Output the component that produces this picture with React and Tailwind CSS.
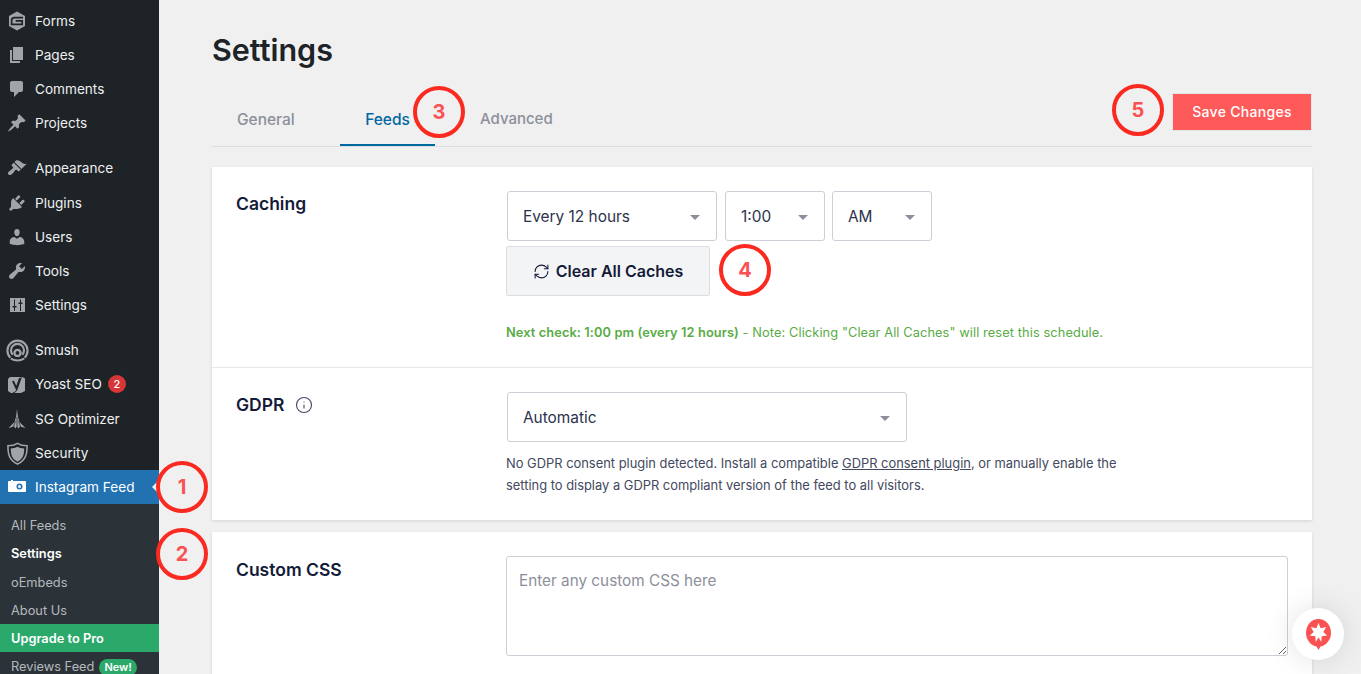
import { Info, RefreshCw } from 'lucide-react';

const Dash = ({ d, className = '' }) => (
  <svg viewBox="0 0 20 20" className={`w-5 h-5 shrink-0 fill-[#a0a5aa] ${className}`}>
    <path fillRule="evenodd" d={d} />
  </svg>
);

const FormsIcon = () => (
  <svg viewBox="0 0 20 20" className="w-[20px] h-[20px] shrink-0">
    <path d="M10 .500l8 4.600v9.800l-8 4.600-8-4.600V5.100z" fill="#a0a5aa" />
    <path d="M16 6.700H7.500Q4.600 6.700 4.600 9.400v3.900h10.600v-3.500H8.700" fill="none" stroke="#1d2327" strokeWidth="1.700" />
  </svg>
);

const SmushIcon = () => (
  <svg viewBox="0 0 24 24" className="w-[23px] h-[23px] shrink-0 fill-none stroke-[#a0a5aa]">
    <path d="M4.500 19.500a10.500 10.500 0 1 1 15 0" strokeWidth="2.200" />
    <path d="M7 16.500a6.800 6.800 0 1 1 10 0" strokeWidth="2.200" />
    <circle cx="12" cy="14.500" r="3.200" strokeWidth="2.400" />
    <path d="M5 20.500q7 4 14 0" strokeWidth="2" />
  </svg>
);

const YoastIcon = () => (
  <svg viewBox="0 0 20 20" className="w-[20px] h-[20px] shrink-0">
    <path d="M3 3h12.500l2.500 1.500V17l-4 2H4l-3-2V5z" fill="#a0a5aa" />
    <path d="M15.500 0L10 15.500q-1 2.800-4 3.500" fill="none" stroke="#1d2327" strokeWidth="1" />
    <path d="M6 7l3.400 7.500L13 4" fill="none" stroke="#1d2327" strokeWidth="1.900" />
  </svg>
);

const SgIcon = () => (
  <svg viewBox="0 0 20 20" className="w-[20px] h-[22px] shrink-0 fill-[#a0a5aa]">
    <path d="M10 0l1 8 1.500 5 6 6-5.500-1.500-1.500 2-1.500-2-1.500 2-1.500-2L1.500 19l6-6L9 8z" />
    <path d="M10 8v11M8.500 12l-2.500 7M11.500 12l2.500 7" stroke="#1d2327" strokeWidth=".7" fill="none" />
  </svg>
);

const ShieldIcon = () => (
  <svg viewBox="0 0 24 24" className="w-[23px] h-[23px] shrink-0">
    <path d="M12 1.500c3 2 6.500 2.500 10 2.500 0 8-1 15-10 19C3 19 2 12 2 4c3.500 0 7-.5 10-2.500z" fill="none" stroke="#a0a5aa" strokeWidth="1.600" />
    <path d="M12 5c2 1.200 4.500 1.600 7 1.700 0 6-1 10.800-7 13.800C6 17.500 5 12.700 5 6.700c2.500-.1 5-.5 7-1.700z" fill="#a0a5aa" />
  </svg>
);

const CameraIcon = () => (
  <svg viewBox="0 0 20 20" className="w-5 h-5 shrink-0 fill-white">
    <path
      fillRule="evenodd"
      d="M2 4h2V3h2v1h9l1.500 0H18q1 0 1 1v9q0 1-1 1H2q-1 0-1-1V5q0-1 1-1zm10.500 2.500a3 3 0 1 0 0 6 3 3 0 0 0 0-6zm0 1.500a1.500 1.500 0 1 1 0 3 1.500 1.500 0 0 1 0-3z"
    />
  </svg>
);

const pages = 'M6 15V2h10v13H6zm-1 1h8v2H3V5h2v11z';
const comments = 'M5 2h9c1.100 0 2 .9 2 2v7c0 1.100-.9 2-2 2h-2l-5 5v-5H5c-1.100 0-2-.9-2-2V4c0-1.100.9-2 2-2z';
const pin = 'M10.440 3.020l1.820-1.820 6.360 6.350-1.830 1.820c-1.050-.68-2.480-.57-3.410.36l-.75.75c-.92.93-1.040 2.350-.35 3.410l-1.830 1.820-2.410-2.410-2.800 2.790c-.42.42-3.380 2.710-3.800 2.290s1.860-3.390 2.280-3.810l2.790-2.790L4.100 9.360l1.830-1.820c1.050.69 2.480.57 3.400-.36l.75-.75c.93-.92 1.050-2.350.36-3.410z';
const brush = 'M14.480 11.060L7.410 3.990l1.500-1.500c.5-.56 2.300-.47 3.510.32 1.210.8 1.430 1.280 2.910 2.100 1.180.64 2.450 1.260 4.450.85zm-.71.71L6.700 4.700 4.930 6.470c-.39.39-.39 1.020 0 1.410l1.060 1.060c.39.39.39 1.030 0 1.420-.6.6-1.430 1.110-2.210 1.690-.35.26-.7.53-1.010.84C1.430 13.230.39 15.460 1.400 16.600c1.060 1.060 3.190-.04 4.520-1.370.31-.31.58-.66.84-1.010.58-.78 1.090-1.610 1.690-2.210.39-.39 1.020-.39 1.410 0l1.060 1.060c.39.39 1.020.39 1.410 0z';
const plug = 'M13.110 4.360L9.870 7.600 8 5.730l3.240-3.240c.35-.34 1.050-.2 1.560.32.52.51.66 1.210.31 1.550zm-8 1.770l.91-1.120 9.010 9.010-1.190.84c-.71.71-2.630 1.160-3.820 1.160H6.140L4.900 17.260c-.59.59-1.540.59-2.120 0-.59-.58-.59-1.530 0-2.120l1.240-1.240v-3.880c0-1.130.4-3.190 1.090-3.890zm7.260 3.970l3.240-3.240c.34-.35 1.040-.21 1.550.31.52.51.66 1.210.31 1.550l-3.240 3.250z';
const users = 'M10 9.250c-2.270 0-2.730-3.440-2.730-3.440C7 4.020 7.820 2 9.970 2c2.160 0 2.980 2.020 2.710 3.810 0 0-.41 3.440-2.680 3.440zm0 2.570L12.720 10c2.390 0 4.520 2.330 4.520 4.530v2.490s-3.650 1.130-7.240 1.130c-3.650 0-7.240-1.130-7.240-1.130v-2.490c0-2.250 1.940-4.480 4.470-4.480z';
const wrench = 'M16.680 9.770c-1.340 1.340-3.300 1.670-4.950.99l-5.410 6.520c-.99.99-2.590.99-3.580 0s-.99-2.590 0-3.570l6.520-5.420c-.68-1.650-.35-3.610.99-4.950 1.280-1.280 3.120-1.620 4.720-1.060l-2.890 2.890 2.820 2.820 2.860-2.870c.53 1.580.18 3.390-1.080 4.650z';
const sliders = 'M18 3v14H3V3h15zM8 11h1.500v1.500H8V16H7v-3.500H5.500V11H7V4.500h1V11zm5-2h-1.500V7.500H13V4.500h1v3h1.500V9H14v7h-1V9z';

const MenuRow = ({ icon, label, children, className = '' }) => (
  <div className={`flex items-center h-[34px] pl-[7px] text-[#f0f0f1] ${className}`}>
    <span className="w-5 h-5 mr-2 flex items-center justify-center">{icon}</span>
    <span className="text-[13.600px] leading-[20px]">{label}</span>
    {children}
  </div>
);

const SubRow = ({ children, className = '' }) => (
  <div className={`flex items-center h-[28px] pl-[11px] text-[12.800px] text-[#b4b9be] ${className}`}>{children}</div>
);

const Sidebar = () => (
  <aside className="w-[159px] h-[674px] shrink-0 overflow-hidden bg-[#1d2327] pt-[4px]">
    <MenuRow icon={<FormsIcon />} label="Forms" />
    <MenuRow icon={<Dash d={pages} />} label="Pages" />
    <MenuRow icon={<Dash d={comments} />} label="Comments" />
    <MenuRow icon={<Dash d={pin} />} label="Projects" />
    <MenuRow icon={<Dash d={brush} />} label="Appearance" className="mt-[11px]" />
    <MenuRow icon={<Dash d={plug} />} label="Plugins" className="mt-px" />
    <MenuRow icon={<Dash d={users} />} label="Users" />
    <MenuRow icon={<Dash d={wrench} />} label="Tools" />
    <MenuRow icon={<Dash d={sliders} />} label="Settings" />
    <MenuRow icon={<SmushIcon />} label="Smush" className="mt-[11px]" />
    <MenuRow icon={<YoastIcon />} label="Yoast SEO">
      <span className="ml-[6px] w-[18px] h-[18px] rounded-full bg-[#d63638] text-white text-[11px] font-medium flex items-center justify-center">2</span>
    </MenuRow>
    <MenuRow icon={<SgIcon />} label="SG Optimizer" className="mt-px" />
    <MenuRow icon={<ShieldIcon />} label="Security" />
    <div className="relative">
      <MenuRow icon={<CameraIcon />} label="Instagram Feed" className="bg-[#2271b1] text-white" />
      <span className="absolute right-0 top-[10px] border-y-[7px] border-r-[7px] border-y-transparent border-r-[#f0f0f1]" />
    </div>
    <div className="bg-[#2c3338] pt-[8px] h-[200px]">
      <SubRow>All Feeds</SubRow>
      <SubRow className="font-semibold text-white">Settings</SubRow>
      <SubRow className="pt-[2px]">oEmbeds</SubRow>
      <SubRow className="pt-[2px]">About Us</SubRow>
      <SubRow className="pt-[2px] bg-[#2ba96b] font-semibold text-white">Upgrade to Pro</SubRow>
      <SubRow className="pt-[2px]">
        Reviews Feed
        <span className="ml-[5px] px-[5px] h-[17px] rounded-full bg-[#2ba96b] text-white text-[11px] font-semibold flex items-center">New!</span>
      </SubRow>
    </div>
  </aside>
);

const Select = ({ value, className = '' }) => (
  <div className={`h-[50px] flex items-center justify-between pl-[15px] pr-[16px] bg-white border border-[#cdcfd6] rounded-[3px] text-[15.400px] text-[#2c324c] ${className}`}>
    <span className="pt-[2px]">{value}</span>
    <span className="border-x-[5px] border-t-[5px] border-x-transparent border-t-[#8c8f9a] mt-[3px]" />
  </div>
);

const SectionTitle = ({ children, className = '' }) => (
  <h2 className={`w-[270px] shrink-0 text-[17.500px] leading-[26px] font-semibold text-[#141b38] ${className}`}>{children}</h2>
);

const Marker = ({ n, className }) => (
  <div className={`absolute w-[52px] h-[52px] rounded-full border-[4px] border-[#fb2a20] flex items-center justify-center text-[20px] font-bold text-[#fa5252] ${className}`}>
    {n}
  </div>
);

export default function App() {
  return (
    <div className="relative flex w-[1361px] h-[674px] overflow-hidden bg-[#f0f0f1] font-['Inter',sans-serif]">
      <Sidebar />

      <main className="flex-1 pl-[53px] pr-[49px] pt-[30px]">
        <h1 className="text-[30.500px] leading-[40px] font-semibold text-[#1d2327]">Settings</h1>

        <div className="flex items-end justify-between h-[77px] border-b border-[#dcdde1]">
          <div className="flex text-[15.500px] font-medium text-[#8c8f9a]">
            <span className="w-[128px] h-[46px] pt-[8px] pl-[25px]">General</span>
            <span className="w-[95px] h-[46px] pt-[8px] text-center text-[#0068a0] border-b-2 border-[#0068a0]">Feeds</span>
            <span className="ml-[45px] h-[46px] pt-[8px] text-[15px]">Advanced</span>
          </div>
          <button className="w-[140px] h-[38px] mb-[15px] pb-[2px] bg-[#ff5a5a] border border-[#e5e5e8] text-white text-[14px] font-medium tracking-[0.3px]">
            Save Changes
          </button>
        </div>

        <div className="mt-5 bg-white shadow-[0_1px_3px_rgba(0,0,0,0.12)]">
          <section className="flex h-[201px] px-6 pt-6 border-b border-[#e8e8eb]">
            <SectionTitle>Caching</SectionTitle>
            <div>
              <div className="flex gap-2 pl-px">
                <Select value="Every 12 hours" className="w-[210px]" />
                <Select value="1:00" className="w-[100px]" />
                <Select value="AM" className="w-[100px] -ml-px" />
              </div>
              <button className="mt-[5px] w-[204px] h-[50px] flex items-center justify-center gap-[6px] bg-[#f3f4f6] border border-[#dcdde1] rounded-[2px] text-[16px] font-semibold text-[#141b38]">
                <RefreshCw className="w-[17px] h-[17px]" strokeWidth={1.500} />
                Clear All Caches
              </button>
              <p className="mt-[29px] text-[12.800px] leading-4 tracking-[0.1px] text-[#59ab46] whitespace-nowrap">
                <b className="font-semibold">Next check: 1:00 pm (every 12 hours)</b> - Note: Clicking "Clear All Caches" will reset this schedule.
              </p>
            </div>
          </section>

          <section className="flex h-[152px] px-6 pt-6">
            <SectionTitle>
              <span className="flex items-center gap-[11px]">
                GDPR <Info className="w-[18px] h-[18px] text-[#434960]" strokeWidth={1.500} />
              </span>
            </SectionTitle>
            <div>
              <Select value="Automatic" className="w-[400px] ml-px" />
              <p className="mt-[11px] text-[12.900px] leading-[22px] text-[#434960] w-[620px]">
                No GDPR consent plugin detected. Install a compatible <u>GDPR consent plugin</u>, or manually enable the setting to display a GDPR compliant version of the feed to all visitors.
              </p>
            </div>
          </section>
        </div>

        <section className="mt-3 flex h-[200px] bg-white px-6 pt-6 shadow-[0_1px_3px_rgba(0,0,0,0.12)]">
          <SectionTitle className="pt-px">Custom CSS</SectionTitle>
          <textarea
            readOnly
            placeholder="Enter any custom CSS here"
            className="w-[782px] h-[100px] px-3 py-[14px] bg-white border border-[#cdcfd6] rounded-[3px] text-[15.300px] leading-[20px] placeholder:text-[#8c8f9a] outline-none"
          />
        </section>
      </main>

      {/* annotation markers */}
      <Marker n="1" className="left-[156px] top-[461px]" />
      <Marker n="2" className="left-[156px] top-[528px]" />
      <Marker n="3" className="left-[413px] top-[86px]" />
      <Marker n="4" className="left-[719px] top-[244px]" />
      <Marker n="5" className="left-[1112px] top-[84px]" />

      {/* chat bubble */}
      <div className="absolute left-[1292px] top-[608px] w-[52px] h-[52px] rounded-full bg-white shadow-[0_0_30px_rgba(0,0,0,0.12)] flex items-center justify-center">
        <svg viewBox="0 0 25 32" className="w-[25px] h-[32px]">
          <path d="M12.500 1C19.500 1 25 7 25 15c0 7-5 12.500-10.500 13.500L12.500 32l-2-3.500C5 27.500 0 22 0 15 0 7 5.500 1 12.500 1z" fill="#fa5252" />
          <path d="M12.500 5l2.200 5.200 5.500-1.300-2.900 5 3.900 3.700-5.500.6-.5 5.800-2.700-4.800-2.700 4.800-.5-5.800-5.500-.6 3.900-3.700-2.900-5 5.500 1.300z" fill="#fff" />
        </svg>
      </div>
    </div>
  );
}
